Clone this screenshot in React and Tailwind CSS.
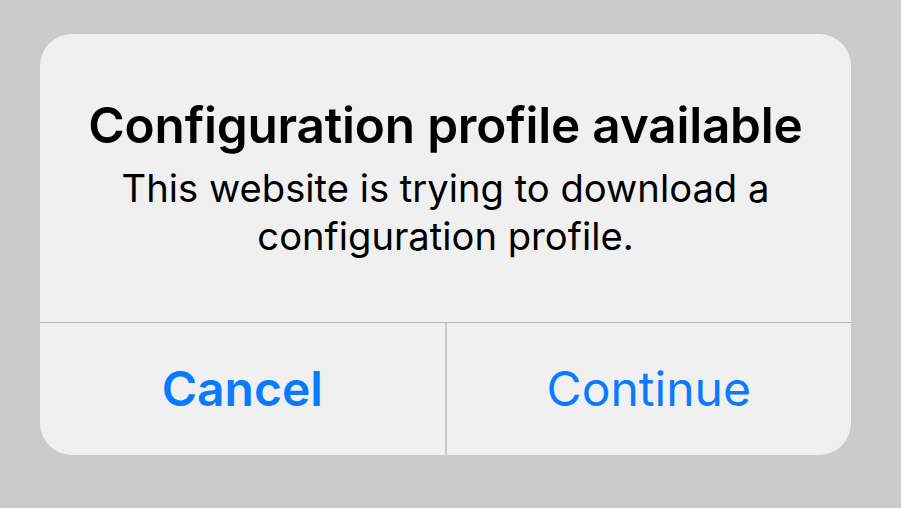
export default function App() {
  return (
    <div
      className="min-h-screen w-full bg-[#cbcbcb] pt-[34px] pl-[40px]"
      style={{ fontFamily: "Inter, 'Noto Sans', sans-serif" }}
    >
      {/* Alert dialog */}
      <div className="w-[811px] h-[421px] bg-[#f0f0f0] rounded-[32px] overflow-hidden flex flex-col">
        {/* Message */}
        <div className="h-[288px] flex flex-col items-center pt-[63px] text-black text-center">
          <h1 className="text-[49.5px] leading-[56px] font-semibold tracking-[-0.2px]">
            Configuration profile available
          </h1>
          <p className="mt-[11px] text-[38.2px] leading-[48px] font-normal">
            This website is trying to download a
            <br />
            configuration profile.
          </p>
        </div>

        <div className="h-px bg-[#b4b4b4]" />

        {/* Actions */}
        <div className="flex-1 flex">
          <button className="flex-1 flex items-center justify-center text-[#0a7aff] text-[48px] font-semibold">
            Cancel
          </button>
          <div className="w-[2px] bg-[#c9c9c9]" />
          <button className="flex-1 flex items-center justify-center text-[#0a7aff] text-[48px] font-normal">
            Continue
          </button>
        </div>
      </div>
    </div>
  );
}
